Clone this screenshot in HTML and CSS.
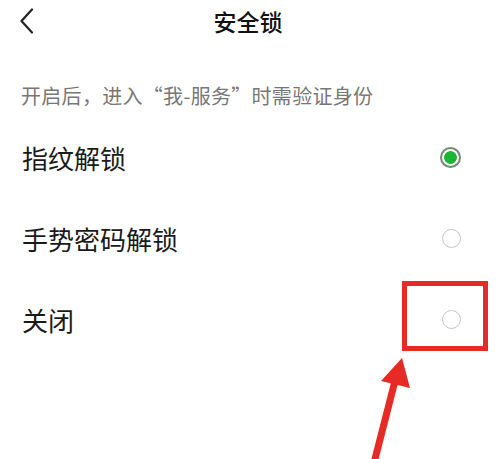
FILE: index.html
```html
<!DOCTYPE html>
<html lang="zh-CN">
<head>
  <meta charset="UTF-8" />
  <meta name="viewport" content="width=device-width, initial-scale=1" />
  <title>安全锁</title>
  <link rel="stylesheet" href="styles.css">
</head>
<body>

  <div class="header">
    <div class="back">
      <svg width="16" height="26" viewBox="0 0 16 26">
        <polyline points="13,1.5 2.5,13 13,24.5" fill="none" stroke="#222" stroke-width="2.2" stroke-linecap="round" stroke-linejoin="round" />
      </svg>
    </div>
    <h1>安全锁</h1>
    <div></div>
  </div>

  <p class="tip">开启后，进入“我-服务”时需验证身份</p>

  <div class="options">
    <div class="option">
      <span>指纹解锁</span>
      <span class="radio checked"></span>
    </div>
    <div class="option">
      <span>手势密码解锁</span>
      <span class="radio"></span>
    </div>
    <div class="option">
      <span>关闭</span>
      <span class="radio"></span>
    </div>
  </div>

  <!-- marca roja sobre la captura -->
  <div class="mark"></div>
  <svg class="arrow" width="60" height="110" viewBox="0 0 60 110">
    <line x1="36" y1="22" x2="14" y2="108" stroke="#e52b24" stroke-width="7" />
    <polygon points="42,3 21,26 50,33" fill="#e52b24" />
  </svg>

</body>
</html>
```

FILE: styles.css
```css
body {
  font-family: "Noto Sans CJK SC", "Noto Sans", sans-serif;
  background-color: #ffffff;
  color: #1a1a1a;
  margin: 0;
  width: 500px;
  height: 459px;
  overflow: hidden;
  position: relative;
}
.header {
  display: grid;
  grid-template-columns: 1fr auto 1fr;
  align-items: center;
  height: 42px;
}
.back {
  padding-left: 19px;
  display: flex;
  align-items: center;
}
.header h1 {
  margin: 0;
  font-size: 23px;
  font-weight: 500;
  color: #111;
  position: relative;
  left: -2px;
}
.tip {
  margin: 41px 0 0 0;
  padding-left: 21px;
  font-size: 20px;
  line-height: 26px;
  letter-spacing: 0.3px;
  color: #777;
}
.options {
  margin-top: 8px;
}
.option {
  display: flex;
  justify-content: space-between;
  align-items: center;
  height: 81px;
  padding: 0 39px 0 22px;
  font-size: 26px;
}
.radio {
  width: 17px;
  height: 17px;
  border: 1.6px solid #c6c6c6;
  border-radius: 50%;
  box-sizing: content-box;
}
.radio.checked {
  width: 17px;
  height: 17px;
  border: 2px solid #6f8a72;
  background: radial-gradient(circle, #17b830 0, #17b830 6px, #ffffff 6.6px);
}
.mark {
  position: absolute;
  left: 402px;
  top: 281px;
  width: 76px;
  height: 60px;
  border: 5px solid #e52b24;
}
.arrow {
  position: absolute;
  left: 360px;
  top: 355px;
}
```
